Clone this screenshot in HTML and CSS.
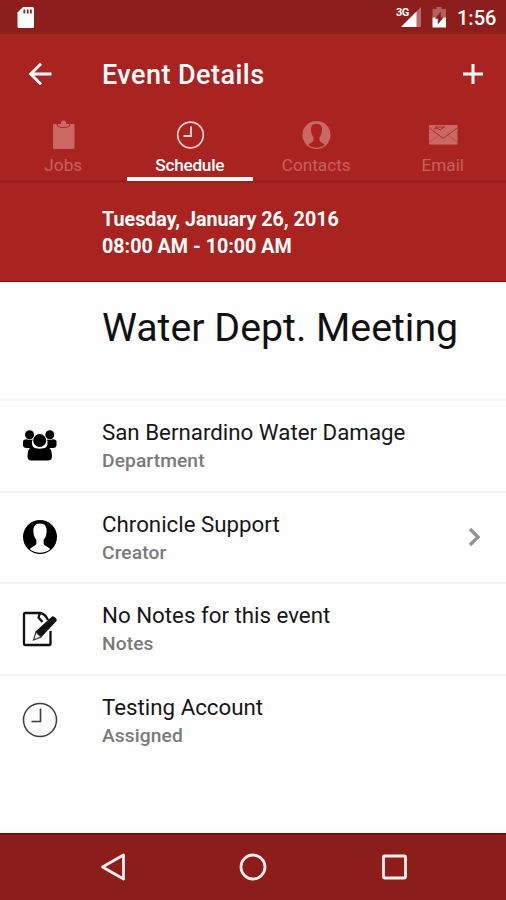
FILE: index.html
```html
<!DOCTYPE html>
<html lang="en">
<head>
<meta charset="utf-8">
<title>Event Details</title>
<link rel="stylesheet" href="styles.css">
</head>
<body>
<div class="screen">
  <div class="status">
    <svg class="sd" width="18" height="22" viewBox="0 0 18 22"><path fill="#fff" d="M6 0h9.500q1.500 0 1.500 1.500v18q0 1.500-1.500 1.500h-13.500q-1.500 0-1.500-1.500V5.500z"/><path stroke="#8e1e1c" stroke-width="1.700" d="M7.300 2.500v4M10.700 2.500v4M13.900 2.500v4"/></svg>
    <div class="signal">
      <span class="net">3G</span>
      <svg width="22" height="20" viewBox="0 0 22 20"><path fill="#fff" fill-opacity=".35" d="M0 20 20 0v20z"/><path fill="#fff" d="M0 20 15.500 4.500V20z"/></svg>
    </div>
    <svg class="battery" width="15" height="21" viewBox="0 0 15 21"><path fill="#fff" fill-opacity=".3" d="M4.500 0h5v2H14v8.500H.5V2h4z"/><path fill="#fff" d="M.5 10.500H14V20q0 .5-.5.500H1q-.5 0-.5-.5z"/><path fill="#8e1e1c" d="M8.700 4.500v5.800h3L5.800 17.500v-5.700H3z"/></svg>
    <span class="time">1:56</span>
  </div>
  <div class="toolbar">
    <svg class="back" width="24" height="24" viewBox="0 0 24 24" fill="none" stroke="#fff" stroke-width="2.900"><path d="M13 1.700 2.700 12 13 22.300M2.500 12h21"/></svg>
    <h1>Event Details</h1>
    <svg class="add" width="22" height="22" viewBox="0 0 22 22" stroke="#fff" stroke-width="3"><path d="M11 1v20M1 11h20"/></svg>
  </div>
  <div class="tabs">
    <div class="tab">
      <svg width="30" height="30" viewBox="0 0 30 30"><path fill="currentColor" d="M6 4h2.500q.5 4 7 4t7-4H25.500q1 0 1 1v23q0 1-1 1H6q-1 0-1-1V5q0-1 1-1zM9.700 4h3q0-3.500 2.800-3.500T18.300 4h3q0 3.300-5.800 3.300T9.700 4z"/></svg>
      <span>Jobs</span>
    </div>
    <div class="tab active">
      <svg width="30" height="30" viewBox="0 0 30 30" fill="none" stroke="currentColor"><circle cx="15.500" cy="15" r="12.800" stroke-width="1.700"/><path stroke-width="2" d="M16 6.500V16H8.500"/></svg>
      <span>Schedule</span>
    </div>
    <div class="tab">
      <svg width="30" height="30" viewBox="0 0 30 30"><circle cx="15.500" cy="15" r="14" fill="currentColor"/><path fill="#a92420" d="M15.500 3.800c4.200 0 5.800 2.800 5.500 6.400-.1 2.800-.8 5-2.500 7v3.200c1.200 2.300 4.200 2.600 5.200 4.600-4.800 3.500-11.600 3.500-16.400 0 1-2 4-2.300 5.200-4.600v-3.200c-1.700-2-2.400-4.200-2.500-7-.3-3.600 1.300-6.400 5.500-6.400z"/></svg>
      <span>Contacts</span>
    </div>
    <div class="tab">
      <svg width="30" height="30" viewBox="0 0 30 30"><path fill="currentColor" d="M1 5h28.500v19.500H1z"/><path fill="none" stroke="#a92420" stroke-width=".9" d="M1.500 8 15.200 18.500 29 8"/><path fill="none" stroke="#a92420" stroke-width=".4" d="M1.500 22l9-6.500M29 22l-9-6.500"/><path fill="none" stroke="#a92420" stroke-width="1" d="M6 9q2-2 4 0l3 1M7 7h9.500L13 9"/></svg>
      <span>Email</span>
    </div>
  </div>
  <div class="when"><b>Tuesday, January 26, 2016</b><b>08:00 AM - 10:00 AM</b></div>
  <div class="title"><span>Water Dept. Meeting</span></div>
  <div class="row">
    <svg width="36" height="36" viewBox="0 0 36 36"><g fill="#000"><circle cx="7.500" cy="6.700" r="4.500"/><circle cx="27.800" cy="6.700" r="4.500"/><path d="M1 13q1-2 3.500-1.800 3.500 1 6 .3c-1.200 3.500-.5 6.500 1.500 8.500H4.500Q1 20 1 17zM34.500 13q-1-2-3.500-1.800-3.500 1-6 .3c1.200 3.500.5 6.500-1.500 8.500H31q3.500 0 3.500-3z"/><circle cx="17.700" cy="12.500" r="6.500"/><path d="M10 19q7.700 3.500 15.400 0 4.600 1 4.600 9 0 4.500-4 4.500H9.500q-4 0-4-4.500 0-8 4.500-9z"/></g></svg>
    <div class="text"><span class="main">San Bernardino Water Damage</span><span class="sub">Department</span></div>
  </div>
  <div class="row">
    <svg width="36" height="36" viewBox="0 0 36 36"><circle cx="18" cy="18" r="17" fill="#000"/><path fill="#fff" d="M18 4.500c5 0 7 3.500 6.600 8-.1 3.400-1 6-3 8.400v4c1.400 2.400 5 2.900 6.700 5-5.500 5-15.100 5-20.600 0 1.700-2.100 5.300-2.600 6.700-5v-4c-2-2.400-2.900-5-3-8.400-.4-4.500 1.600-8 6.600-8z"/></svg>
    <div class="text"><span class="main">Chronicle Support</span><span class="sub">Creator</span></div>
    <svg class="chev" width="13" height="20" viewBox="0 0 13 20" fill="none" stroke="#929292" stroke-width="3.200"><path d="m2 2 8 8-8 8"/></svg>
  </div>
  <div class="row">
    <svg width="36" height="36" viewBox="0 0 36 36"><path fill="none" stroke="#111" stroke-width="2.300" stroke-linejoin="round" d="M19 2H3q-1 0-1 1v30q0 1 1 1h24.500q1 0 1-1V20M18 2l-1.500 4.500 4 4.500M18 2q5 .5 8 7"/><path fill="#111" d="M13.500 20.500 30 5.500q1.500-.8 3.500 1.300t1 3.200L19.500 26z"/><path fill="#fff" stroke="#333" stroke-width="1.200" d="m14 21 5 5-7.500 3z"/></svg>
    <div class="text"><span class="main">No Notes for this event</span><span class="sub">Notes</span></div>
  </div>
  <div class="row">
    <svg width="36" height="36" viewBox="0 0 36 36" fill="none" stroke="#3c3c3c"><circle cx="18" cy="18" r="16.500" stroke-width="1.500"/><path stroke-width="1.600" d="M18.500 6.500v13h-9"/></svg>
    <div class="text"><span class="main">Testing Account</span><span class="sub">Assigned</span></div>
  </div>
  <div class="nav">
    <svg width="28" height="30" viewBox="0 0 28 30"><path d="M24.500 3v24L3.500 15z"/></svg>
    <svg width="28" height="30" viewBox="0 0 28 30"><circle cx="14" cy="15" r="12"/></svg>
    <svg width="28" height="30" viewBox="0 0 28 30"><rect x="3.500" y="4" width="22" height="22" rx="1"/></svg>
  </div>
</div>
</body>
</html>
```
FILE: styles.css
```css
* { box-sizing: border-box; }
body { margin: 0; font-family: Roboto, sans-serif; }
svg { display: block; flex: none; }
span, b, h1 { white-space: nowrap; }
.screen { width: 506px; height: 900px; display: flex; flex-direction: column; background: #fefefe; overflow: hidden; }
.status { height: 34px; background: #8e1e1c; display: flex; padding: 7px 10px 0 17px; color: #fff; }
.signal { margin-left: auto; position: relative; margin-right: 9px; }
.net { position: absolute; left: -5px; top: 0; font-size: 11px; line-height: 11px; font-weight: 700; letter-spacing: -.5px; }
.battery { margin-right: 10px; }
.time { font-size: 20px; line-height: 23px; font-weight: 500; width: 39px; }
.toolbar { height: 81px; background: #a92420; display: flex; align-items: center; padding: 0 22px 2px 28px; color: #fff; }
.toolbar h1 { margin: 2px auto 0 50px; font-size: 27px; line-height: 32px; font-weight: 500; letter-spacing: .45px; }
.tabs { height: 68px; background: #a92420; display: grid; grid-template-columns: repeat(4, 1fr); border-bottom: 3px solid #96201d; }
.tab { display: flex; flex-direction: column; align-items: center; padding-top: 5px; height: 66px; color: #c8605d; font-size: 17.200px; line-height: 22px; border-bottom: 0 solid #fff; }
.tab span { margin-top: 4px; }
.tab svg { color: #cb6864; }
.active { border-bottom-width: 4px; color: #fff; font-weight: 500; letter-spacing: -.25px; }
.active svg { color: #f6cfcd; }
.when { height: 98.500px; background: #a92420; padding: 22.500px 0 0 102px; color: #fff; display: flex; flex-direction: column; align-items: flex-start; font-size: 19.700px; line-height: 27px; border-bottom: 1px solid #980b08; }
.title { height: 119.500px; padding: 22.500px 0 0 102px; font-size: 39.300px; line-height: 48px; color: #111; border-bottom: 3px solid #f6f6f6; }
.row { height: 91.500px; display: flex; align-items: center; padding: 0 25px 0 22px; border-bottom: 2px solid #f4f4f4; }
.row:nth-last-child(2) { border-bottom-color: transparent; }
.text { margin-left: 44px; padding-top: 2px; display: flex; flex-direction: column; align-items: flex-start; }
.main { font-size: 22.300px; line-height: 29px; color: #161616; }
.sub { font-size: 19.200px; line-height: 28px; font-weight: 500; color: #7a7a7a; letter-spacing: .1px; }
.chev { margin-left: auto; }
.nav { margin-top: auto; height: 67px; background: #8d1d1b; border-top: 2px solid #850505; display: flex; justify-content: center; gap: 112.500px; padding-top: 17px; }
.nav svg { fill: none; stroke: #fff0ee; stroke-width: 2.800; stroke-linejoin: round; }
```
